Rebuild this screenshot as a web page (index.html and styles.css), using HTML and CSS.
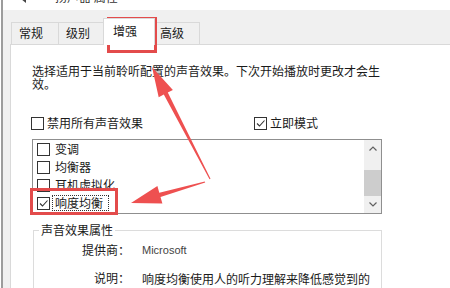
FILE: index.html
```html
<!DOCTYPE html>
<html lang="zh-CN">
<head>
<meta charset="utf-8">
<title>扬声器 属性</title>
<link rel="stylesheet" href="styles.css">
</head>
<body>
<div class="window">
  <div class="titlebar">
    <svg class="appicon" width="16" height="16" viewBox="0 0 16 16"><rect x="1" y="5" width="5" height="6" fill="#555"/><path d="M6 5 L11 1 L11 15 L6 11 Z" fill="#444"/></svg>
    <span class="title">扬声器 属性</span>
  </div>
  <div class="dialog">
    <div class="tabs">
      <div class="tab">常规</div>
      <div class="tab">级别</div>
      <div class="tab active">增强</div>
      <div class="tab">高级</div>
    </div>
    <div class="panel">
      <p class="intro">选择适用于当前聆听配置的声音效果。下次开始播放时更改才会生效。</p>

      <div class="options">
        <label class="check first"><span class="cb"></span>禁用所有声音效果</label>
        <label class="check"><span class="cb"><svg width="11" height="11" viewBox="0 0 11 11"><path d="M2 5.5 L4.5 8 L9.5 2.5" fill="none" stroke="#333" stroke-width="1.1"/></svg></span>立即模式</label>
      </div>

      <div class="listbox">
        <div class="items">
          <div class="item"><span class="cb"></span><span class="lbl">变调</span></div>
          <div class="item"><span class="cb"></span><span class="lbl">均衡器</span></div>
          <div class="item"><span class="cb"></span><span class="lbl">耳机虚拟化</span></div>
          <div class="item"><span class="cb"><svg width="11" height="11" viewBox="0 0 11 11"><path d="M2 5.5 L4.5 8 L9.5 2.5" fill="none" stroke="#333" stroke-width="1.1"/></svg></span><span class="lbl focus">响度均衡</span></div>
        </div>
        <div class="scrollbar">
          <div class="sb-btn"><svg width="8" height="5" viewBox="0 0 8 5"><path d="M0.5 4.5 L4 1 L7.5 4.5" fill="none" stroke="#606060" stroke-width="1.2"/></svg></div>
          <div class="sb-track"><div class="sb-thumb"></div></div>
          <div class="sb-btn"><svg width="8" height="5" viewBox="0 0 8 5"><path d="M0.5 0.5 L4 4 L7.5 0.5" fill="none" stroke="#606060" stroke-width="1.2"/></svg></div>
        </div>
      </div>

      <fieldset class="props">
        <legend>声音效果属性</legend>
        <div class="prop first">
          <span class="key">提供商：</span>
          <span class="val latin">Microsoft</span>
        </div>
        <div class="prop">
          <span class="key">说明：</span>
          <span class="val">响度均衡使用人的听力理解来降低感觉到的音量差异。</span>
        </div>
      </fieldset>
    </div>
  </div>
</div>

<!-- screenshot annotations: red boxes and arrows drawn over the dialog -->
<svg class="annot" width="450" height="288" viewBox="0 0 450 288">
  <rect x="108.5" y="18.5" width="47" height="33" fill="none" stroke="#e34b4b" stroke-width="3"/>
  <rect x="31.5" y="189.5" width="85" height="24" fill="none" stroke="#e34b4b" stroke-width="3"/>
  <polygon fill="#ee5050" points="152,67 172.9,89.9 167.8,92.6 210.5,178.7 209.5,179.3 163.8,94.6 158.7,97.3"/>
  <polygon fill="#ee5050" points="131,203 157.4,186.1 159.3,192.7 204.8,181.4 205.2,182.6 160.5,196.9 162.4,203.5"/>
</svg>
</body>
</html>
```

FILE: styles.css
```css
* { box-sizing: border-box; }

body {
	margin: 0;
	width: 450px;
	height: 288px;
	overflow: hidden;
	position: relative;
	background: #fff;
	font-family: "Noto Sans CJK SC", "Microsoft YaHei", sans-serif;
	font-size: 12px;
	color: #1a1a1a;
}

.window {
	margin-left: 1px;
	border-left: 2px solid #9c9c9c;
	height: 288px;
	display: flex;
	flex-direction: column;
}

/* title bar, mostly cut off at the top of the shot */
.titlebar {
	flex: none;
	height: 10px;
	overflow: hidden;
	background: #fff;
	display: flex;
	align-items: flex-start;
	padding-left: 12px;
}
.titlebar .appicon { margin-top: -12px; }
.titlebar .title {
	margin-top: -10px;
	margin-left: 24px;
	line-height: 14px;
	color: #333;
}

.dialog {
	flex: 1;
	min-height: 0;
	background: #f0f0f0;
	padding-left: 7px;
	display: flex;
	flex-direction: column;
}

/* tabs */
.tabs {
	flex: none;
	height: 34px;
	display: flex;
	align-items: flex-end;
	padding-left: 1px;
}
.tab {
	width: 48px;
	height: 22px;
	margin-right: -1px;
	border: 1px solid #d9d9d9;
	border-bottom: none;
	padding-left: 7px;
	line-height: 20px;
	background: #f0f0f0;
}
.tab.active {
	width: 52px;
	height: 27px;
	margin: 0 -3px -1px -2px;
	padding-left: 9px;
	line-height: 24px;
	background: #fff;
	position: relative;
	z-index: 1;
}

.panel {
	flex: 1;
	min-height: 0;
	overflow: hidden;
	background: #fff;
	border-top: 1px solid #d9d9d9;
	border-left: 1px solid #d9d9d9;
	padding-left: 21px;
}

.intro {
	margin: 19px 0 0;
	width: 350px;
	line-height: 13px;
}

/* checkboxes */
.cb {
	width: 13px;
	height: 13px;
	border: 1px solid #333;
	background: #fff;
	display: inline-flex;
	flex: none;
}

.options {
	margin-top: 26px;
	display: flex;
	height: 14px;
	line-height: 14px;
}
.check {
	display: flex;
	align-items: center;
}
.check .cb { margin-right: 3px; }
.check.first {
	width: 223px;
	margin-left: -1px;
}

/* effects list */
.listbox {
	margin-top: 9px;
	width: 350px;
	height: 75px;
	border: 1px solid #8f8f8f;
	display: flex;
}
.items {
	flex: 1;
	padding-left: 4px;
}
.item {
	height: 18px;
	display: flex;
	align-items: center;
}
.item .cb { margin-right: 2px; }
.item .lbl {
	border: 1px solid transparent;
	padding: 0 5px 0 2px;
	line-height: 14px;
}
.item .lbl.focus { border: 1px dotted #333; }

.scrollbar {
	width: 17px;
	background: #f0f0f0;
	display: flex;
	flex-direction: column;
}
.sb-btn {
	height: 17px;
	display: flex;
	align-items: center;
	justify-content: center;
}
.sb-track {
	flex: 1;
	padding-top: 13px;
}
.sb-thumb {
	height: 26px;
	background: #cdcdcd;
}

/* properties group box */
.props {
	margin: 9px 0 0 1px;
	width: 349px;
	min-width: 0;
	border: 1px solid #dcdcdc;
	padding: 0;
}
.props legend {
	margin-left: 5px;
	padding: 0 2px;
	line-height: 14px;
}
.prop {
	display: grid;
	grid-template-columns: 96px 1fr;
	column-gap: 12px;
	line-height: 14px;
	margin-top: 13px;
}
.prop.first { margin-top: 6px; }
.prop .key { text-align: right; }
.prop .val { line-height: 15px; }
.prop .latin {
	font-family: "Liberation Sans", Arial, sans-serif;
	font-size: 11px;
	color: #444;
}

.annot {
	position: absolute;
	top: 0;
	left: 0;
	pointer-events: none;
}
```
